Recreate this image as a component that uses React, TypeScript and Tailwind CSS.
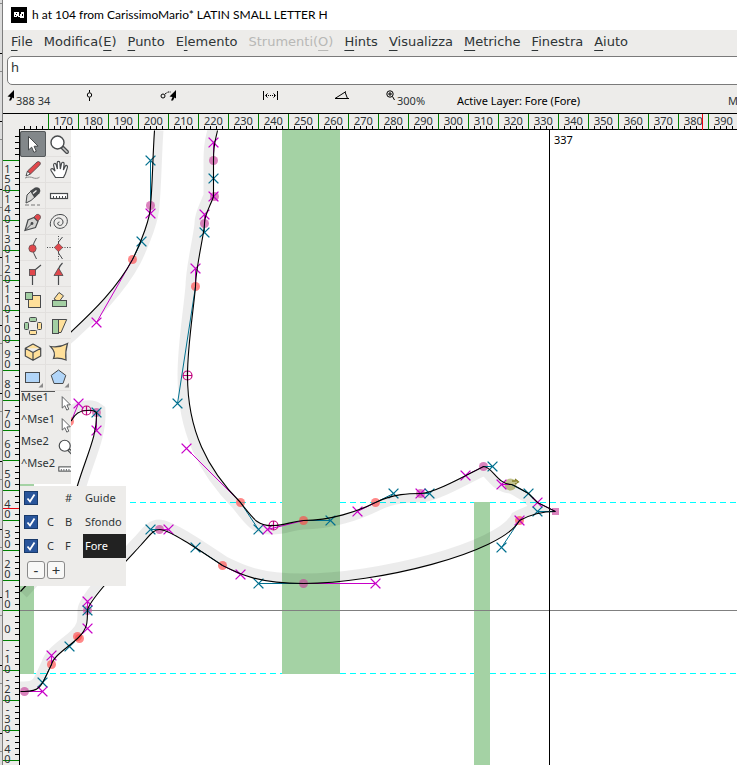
import React from 'react';

interface MenuItem {
    before?: string;
    key: string;
    after?: string;
    disabled?: boolean;
}

type HandleKind = 'prev' | 'next';
type NodeKind = 'curve' | 'smooth' | 'extremum' | 'corner' | 'selected';

const MENU: MenuItem[] = [
    { key: 'F', after: 'ile' },
    { before: 'Modifica(', key: 'E', after: ')' },
    { key: 'P', after: 'unto' },
    { before: 'E', key: 'l', after: 'emento' },
    { before: 'Strumenti(', key: 'O', after: ')', disabled: true },
    { key: 'H', after: 'ints' },
    { key: 'V', after: 'isualizza' },
    { key: 'M', after: 'etriche' },
    { key: 'F', after: 'inestra' },
    { key: 'A', after: 'iuto' },
];

const H_MARKS = Array.from({ length: 23 }, (_, i) => 170 + i * 10);
const V_MARKS = Array.from({ length: 20 }, (_, i) => 150 - i * 10);

const INK = '#474a4c';
const RED = '#e0484c';
const YELLOW = '#ffe09a';
const GREEN = '#a3cfa3';

/* Tool drawings, each on a 26x26 cell */
const TOOLS: { name: string; icon: React.ReactNode }[] = [
    {
        name: 'Pointer',
        icon: <path d="M8.5 5.5V19l3.2-2.8 2.2 5.2 2.4-1.1-2.2-5 4-.2z" fill="#fff" stroke={INK} />,
    },
    {
        name: 'Magnify',
        icon: (
            <>
                <path d="M16 16l5 5" stroke={INK} strokeWidth="4" strokeLinecap="round" />
                <path d="M17 17l4 4" stroke="#c9c9c7" strokeWidth="1.6" strokeLinecap="round" />
                <circle cx="11.5" cy="11.5" r="6.5" fill="#fff" stroke={INK} strokeWidth="1.4" />
            </>
        ),
    },
    {
        name: 'Freehand',
        icon: (
            <>
                <path d="M6 19l1.5-5 3 3z" fill="#fff" stroke={INK} />
                <path d="M7.5 14L17 5q1.5-1 2.8.2t0 2.8L10.5 17z" fill={RED} stroke={INK} strokeWidth=".8" />
                <path d="M5 21c4-1.5 6-1 8-.2s5 .8 6.5-.6" fill="none" stroke="#8c8c8c" />
            </>
        ),
    },
    {
        name: 'Scroll',
        icon: (
            <path
                d="M9.5 20.5L5.3 14q-1-1.8.2-2.3t2.2 1L9 14.2 7.6 8.3q-.2-1.6 1-1.8t1.6 1.3l1.2 4.3L11.2 6q0-1.6 1.3-1.6T13.9 6l.4 6 1.2-5.5q.4-1.5 1.6-1.2t1 1.8L17.4 13l1.7-3.6q.7-1.3 1.7-.8t.6 1.8l-2 6.3-1.9 3.8z"
                fill="#fff"
                stroke={INK}
                strokeWidth="1.2"
            />
        ),
    },
    {
        name: 'Knife',
        icon: (
            <>
                <path d="M6 20l1-8 4-4 5 5-5 4.5z" fill="#d8d8d6" stroke={INK} />
                <path d="M10 8l5-3.5q3.5-1 4.8 1.2t-.3 4.5L14.5 15z" fill={INK} />
                <path d="M13 10.5l3.5-3" stroke="#ededeb" strokeWidth="1.4" />
                <path d="M5 22h4M11 22h4M17 22h3" stroke="#777" />
            </>
        ),
    },
    {
        name: 'Ruler',
        icon: (
            <>
                <rect x="4.5" y="10.5" width="17" height="5" fill="#fff" stroke={INK} strokeWidth="1.2" />
                <path d="M7.5 15v-2M10.5 15v-2M13.5 15v-2M16.5 15v-2M19.5 15v-2" stroke={INK} />
            </>
        ),
    },
    {
        name: 'Pen',
        icon: (
            <>
                <path d="M5 21.5l3-10.5 6-2.5 4 4-2.5 6z" fill="#d3d3d1" stroke={INK} strokeWidth="1.2" />
                <path d="M5 21.5l6.5-6.5" stroke={INK} />
                <circle cx="12" cy="14.5" r="1.4" fill={INK} />
                <path d="M14 8l2.5-2.5q2-.7 3.3.8t.4 3.2L18 12z" fill={RED} stroke={INK} strokeWidth=".7" />
            </>
        ),
    },
    {
        name: 'Spiro',
        icon: (
            <path
                d="M4.5 17.5C3 10 9 5 15 5.5s7.5 6 5.5 10-7.5 5-10.5 2.5-2.5-7 .5-8.5 6.5.5 6.5 3.5-3 4.2-4.5 3-.8-3 1-3"
                fill="none"
                stroke={INK}
            />
        ),
    },
    {
        name: 'Curve point',
        icon: (
            <>
                <path d="M16.5 3q-7 10 0 21" fill="none" stroke={INK} />
                <circle cx="12.5" cy="13.5" r="3.7" fill={RED} stroke={INK} strokeWidth=".6" />
            </>
        ),
    },
    {
        name: 'HV curve point',
        icon: (
            <>
                <path d="M1 12.5h24M12.5 1v24" stroke={INK} strokeDasharray="1 1.5" />
                <path d="M16.5 2l-4 5v11l4 6" fill="none" stroke={INK} />
                <path d="M12.5 8.3l4.2 4.2-4.2 4.2-4.2-4.2z" fill={RED} stroke={INK} strokeWidth=".6" />
            </>
        ),
    },
    {
        name: 'Corner point',
        icon: (
            <>
                <path d="M21 4l-8.5 7v13" fill="none" stroke={INK} strokeWidth="1.2" />
                <rect x="9.5" y="8.5" width="6" height="6" fill={RED} stroke={INK} strokeWidth=".8" />
            </>
        ),
    },
    {
        name: 'Tangent point',
        icon: (
            <>
                <path d="M16.5 2q-3 3-4 6v16" fill="none" stroke={INK} strokeWidth="1.2" />
                <path d="M12.5 7l4.5 7.5H8z" fill={RED} stroke={INK} strokeWidth=".8" />
            </>
        ),
    },
    {
        name: 'Scale',
        icon: (
            <g stroke={INK}>
                <rect x="8.5" y="8.5" width="12" height="12" fill={YELLOW} />
                <rect x="5.5" y="5.5" width="7" height="7" fill={GREEN} />
            </g>
        ),
    },
    {
        name: 'Rotate',
        icon: (
            <g stroke={INK}>
                <path d="M8 12l5-6.5 4.5 3.3-4.5 6z" fill={YELLOW} />
                <rect x="6.5" y="13.5" width="14" height="6" fill={GREEN} />
            </g>
        ),
    },
    {
        name: 'Flip',
        icon: (
            <g stroke={INK}>
                <circle cx="13" cy="13" r="6" fill="none" stroke="#aaa" strokeDasharray="2 2" />
                <rect x="9.5" y="4.5" width="7" height="4" rx="1" fill={GREEN} />
                <rect x="4.5" y="9.5" width="4" height="7" rx="1" fill={GREEN} />
                <rect x="17.5" y="9.5" width="4" height="7" rx="1" fill={YELLOW} />
                <rect x="9.5" y="17.5" width="7" height="4" rx="1" fill={YELLOW} />
            </g>
        ),
    },
    {
        name: 'Skew',
        icon: (
            <g stroke={INK}>
                <path d="M12.5 6.5h8.2L15 19.5h-2.5z" fill={YELLOW} />
                <rect x="6.5" y="6.5" width="6" height="14" fill={GREEN} />
            </g>
        ),
    },
    {
        name: '3D rotate',
        icon: (
            <path
                d="M13 5l7.7 4.2v7.8L13 21.3 5.3 17V9.2zM5.3 9.2l7.7 4.3 7.7-4.3M13 13.5v7.8"
                fill={YELLOW}
                stroke={INK}
                strokeWidth="1.2"
                strokeLinejoin="round"
            />
        ),
    },
    {
        name: 'Perspective',
        icon: <path d="M4.5 7.5q9 1.5 17-3-2.5 8-1.5 16.5-6-2.5-12.5-1.500 3-6-3-12z" fill={YELLOW} stroke={INK} strokeWidth="1.2" />,
    },
    {
        name: 'Rectangle',
        icon: (
            <>
                <rect x="5.5" y="7.5" width="14" height="10" fill="#b1d5f8" stroke={INK} />
                <path d="M23 18v4.5h-4.5z" fill="#8a8a8a" />
            </>
        ),
    },
    {
        name: 'Polygon',
        icon: (
            <>
                <path d="M12.5 5l7.3 5.4L17 18.5H8L5.2 10.4z" fill="#b1d5f8" stroke={INK} />
                <path d="M23 18v4.5h-4.5z" fill="#8a8a8a" />
            </>
        ),
    },
];

const MOUSE_BINDINGS = [
    { label: 'Mse1', tool: 0 },
    { label: '^Mse1', tool: 0 },
    { label: 'Mse2', tool: 1 },
    { label: '^Mse2', tool: 5 },
];

const LAYERS = [
    { name: 'Guide', curve: '', kind: '#' },
    { name: 'Sfondo', curve: 'C', kind: 'B' },
    { name: 'Fore', curve: 'C', kind: 'F' },
];

/* Glyph outline, in canvas units */
const STEM_LEFT = 'M154 130C152 160 152 185 150 205C150 217 141 241 132 259C116 289 90 313 71 331L20 376';
const COUNTER = 'M20 440L71 420C75 412 80 410 86 410Q92 409 96 412C97 435 86 455 77 485C65 525 50 560 20 591';
const BODY =
    'M20 691H24C42 691 42 682 51 664C53 655 69 646 78 637C87 628 87 622 87 610C87 600 130 556 140 545C150 534 153 529 159 529C168 529 195 547 222 565C240 574 258 583 303 583C375 583 501 553 519 520C528 515 540 511 555 511L537 502L528 493C522 490 517 486 511 484C497 484 492 466 483 466C465 475 433 493 420 493C410 493 393 493 375 502C357 511 330 520 303 520C290 521 285 525 273 525C258 526 254 520 240 502C207 469 187 430 187 375C187 345 193 310 195 286C195 268 204 232 204 223C204 214 210 205 213 196V160C213 142 215 140 217 130';
const REGION = [STEM_LEFT, COUNTER.replace('M', 'L'), BODY.replace('M', 'L'), 'Z'].join('');

const HANDLES: [HandleKind, number, number, number, number][] = [
    ['next', 150, 160, 150, 205],
    ['prev', 150, 213, 150, 205],
    ['next', 141, 241, 132, 259],
    ['prev', 96, 322, 132, 259],
    ['prev', 213, 142, 213, 160],
    ['next', 213, 178, 213, 178],
    ['prev', 213, 196, 213, 196],
    ['prev', 204, 214, 204, 223],
    ['next', 204, 232, 204, 223],
    ['prev', 195, 268, 195, 286],
    ['next', 177, 403, 195, 286],
    ['prev', 186, 448, 240, 502],
    ['next', 258, 529, 240, 502],
    ['prev', 267, 529, 303, 520],
    ['next', 330, 520, 303, 520],
    ['prev', 357, 511, 375, 502],
    ['next', 393, 493, 375, 502],
    ['prev', 420, 493, 420, 493],
    ['next', 429, 493, 420, 493],
    ['prev', 465, 475, 483, 466],
    ['next', 492, 466, 483, 466],
    ['prev', 501, 484, 511, 484],
    ['next', 528, 493, 511, 484],
    ['prev', 537, 502, 555, 511],
    ['next', 537, 511, 555, 511],
    ['prev', 519, 520, 519, 520],
    ['next', 501, 547, 519, 520],
    ['prev', 375, 583, 303, 583],
    ['next', 258, 583, 303, 583],
    ['prev', 240, 574, 222, 565],
    ['next', 195, 547, 222, 565],
    ['prev', 168, 529, 159, 529],
    ['next', 150, 529, 159, 529],
    ['prev', 87, 601, 87, 610],
    ['next', 87, 610, 87, 610],
    ['prev', 87, 628, 78, 637],
    ['next', 69, 646, 78, 637],
    ['prev', 51, 655, 51, 664],
    ['next', 42, 682, 51, 664],
    ['prev', 42, 691, 24, 691],
    ['prev', 78, 403, 71, 420],
    ['next', 96, 412, 96, 412],
    ['prev', 96, 430, 96, 412],
];

const NODES: [NodeKind, number, number][] = [
    ['smooth', 150, 205],
    ['curve', 132, 259],
    ['smooth', 213, 160],
    ['smooth', 214, 196],
    ['smooth', 204, 223],
    ['curve', 195, 286],
    ['extremum', 187, 375],
    ['curve', 240, 502],
    ['extremum', 273, 525],
    ['curve', 303, 520],
    ['curve', 375, 502],
    ['smooth', 420, 493],
    ['smooth', 483, 466],
    ['selected', 511, 484],
    ['corner', 555, 511],
    ['curve', 519, 520],
    ['smooth', 303, 583],
    ['curve', 222, 565],
    ['smooth', 159, 529],
    ['smooth', 87, 610],
    ['curve', 77, 636],
    ['curve', 79, 638],
    ['curve', 51, 664],
    ['smooth', 24, 691],
    ['curve', 69, 421],
    ['extremum', 86, 410],
    ['smooth', 96, 412],
];

const HANDLE_COLORS: Record<HandleKind, string> = { prev: '#c800c8', next: '#00708f' };

const Icon: React.FC<{ size?: number; children: React.ReactNode }> = ({ size = 26, children }) => (
    <svg width={size} height={size} viewBox="0 0 26 26" fill="none" aria-hidden="true" className="block shrink-0">
        {children}
    </svg>
);

const GlyphNode: React.FC<{ kind: NodeKind; x: number; y: number }> = ({ kind, x, y }) => {
    if (kind === 'extremum') {
        return (
            <g fill="none" stroke="#c0007c" strokeWidth="1.2">
                <circle cx={x + 0.5} cy={y + 0.5} r="4.5" />
                <path d={`M${x - 4} ${y + 0.5}h9M${x + 0.5} ${y - 4}v9`} />
            </g>
        );
    }
    if (kind === 'corner') {
        return <rect x={x - 3} y={y - 3} width="7" height="7" fill="#c8409b" fillOpacity=".65" />;
    }
    if (kind === 'selected') {
        return (
            <g>
                <circle cx={x - 0.5} cy={y + 0.5} r="6" fill="#8f8f32" fillOpacity=".55" />
                <path d={`M${x + 1} ${y - 3}h6M${x + 4} ${y - 5}l3.5 3-3.5 2`} stroke="#85802a" fill="none" strokeWidth="1.3" />
            </g>
        );
    }
    return <circle cx={x + 0.5} cy={y + 0.5} r="4.5" fill={kind === 'curve' ? '#ff4848' : '#c8409b'} fillOpacity=".65" />;
};

const GlyphCanvas: React.FC = () => (
    <svg className="block h-full w-full" role="img" aria-label="Glyph outline of h">
        <defs>
            <clipPath id="inside">
                <path d={REGION} />
            </clipPath>
        </defs>
        <g transform="translate(-20 -130)" fill="none">
            {/* Blue zones and metrics */}
            <path d="M20 502.5H4000M20 673.5H4000" stroke="#00ffff" strokeDasharray="6 4" />
            <g fill="#a4d2a4" shapeRendering="crispEdges">
                <rect x="282" y="130" width="58" height="544" />
                <rect x="474" y="502" width="16" height="2000" />
                <rect x="20" y="484" width="14" height="190" />
            </g>
            <path d="M20 610.5H4000" stroke="#808080" />

            {/* Stroke thickness shown inside the outline */}
            <g clipPath="url(#inside)">
                <path
                    d={STEM_LEFT + COUNTER + BODY}
                    stroke="#000"
                    strokeOpacity=".075"
                    strokeWidth="19"
                />
            </g>
            <path d="M549.5 130V4000" stroke="#000" />

            {NODES.map(([kind, x, y], i) => (
                <GlyphNode key={i} kind={kind} x={x} y={y} />
            ))}
            {HANDLES.map(([kind, x, y, nx, ny], i) => (
                <g key={i} stroke={HANDLE_COLORS[kind]}>
                    <path d={`M${x + 0.5} ${y + 0.5}L${nx + 0.5} ${ny + 0.5}`} />
                    <path d={`M${x - 4} ${y - 4}l9 9M${x + 5} ${y - 4}l-9 9`} strokeWidth="1.2" strokeLinecap="square" />
                </g>
            ))}
            <path d={STEM_LEFT + COUNTER + BODY} stroke="#000" strokeWidth="1.1" transform="translate(.5 .5)" />
            <text x="554" y="144" fill="#000" className="text-[11px]">
                337
            </text>
        </g>
    </svg>
);

const Toolbox: React.FC = () => (
    <div className="absolute top-0 left-0 w-[51px] overflow-hidden bg-[#edecea] pt-px pb-1">
        <div className="grid grid-cols-[26px_26px]">
            {TOOLS.map((tool, i) => (
                <button
                    key={tool.name}
                    aria-label={tool.name}
                    className={
                        i === 0
                            ? 'h-[26px] w-[26px] rounded-[2px] bg-[#82878a] outline outline-1 -outline-offset-1 outline-[#55595b]'
                            : 'h-[26px] w-[26px] shadow-[inset_-1px_-1px_#e2e0de]'
                    }
                >
                    <Icon>{tool.icon}</Icon>
                </button>
            ))}
        </div>
        <div className="ml-px w-[34px] border-t border-[#555]" />
        {MOUSE_BINDINGS.map(({ label, tool }) => (
            <div key={label} className="flex h-[22px] items-start justify-between pl-px text-[11px] leading-[10px] text-[#2e3436]">
                <span>{label}</span>
                <span className="-mr-[6px]">
                    <Icon size={22}>{TOOLS[tool].icon}</Icon>
                </span>
            </div>
        ))}
    </div>
);

const LayersPanel: React.FC = () => (
    <div className="absolute top-[356px] left-0 w-[106px] bg-[#edecea] pb-[7px] text-[11px] text-[#2e3436]">
        {LAYERS.map((layer) => (
            <label key={layer.name} className="grid h-6 grid-cols-[22px_18px_23px_1fr] items-center">
                <span className="relative ml-1 block h-[14px] w-[14px]">
                    <input
                        type="checkbox"
                        defaultChecked
                        className="peer block h-[14px] w-[14px] appearance-none border border-[#193a6b] bg-white checked:bg-[#29559b]"
                    />
                    <svg viewBox="0 0 14 14" className="pointer-events-none absolute inset-0 hidden peer-checked:block">
                        <path d="M3.5 7.5l2.5 3 4.5-7" stroke="#fff" strokeWidth="1.8" fill="none" />
                    </svg>
                </span>
                <span className="pl-[5px]">{layer.curve}</span>
                <span className="pl-[5px]">{layer.kind}</span>
                <span
                    className={
                        layer.name === 'Fore'
                            ? 'flex h-6 items-center bg-[#222] pl-[2px] text-white'
                            : 'flex h-6 items-center pl-[2px]'
                    }
                >
                    {layer.name}
                </span>
            </label>
        ))}
        <div className="flex gap-[2px] pt-[3px] pl-[7px] leading-none">
            {['-', '+'].map((sign) => (
                <button
                    key={sign}
                    aria-label={sign === '-' ? 'Remove layer' : 'Add layer'}
                    className="flex h-[18px] w-[18px] items-center justify-center rounded-[3px] border border-[#8a8a8a] bg-[#f8f8f7] text-[15px]"
                >
                    {sign}
                </button>
            ))}
        </div>
    </div>
);

const InfoBar: React.FC = () => (
    <div className="flex h-7 shrink-0 overflow-hidden pt-[5px] pl-1 text-[11px] whitespace-nowrap text-[#2e3436]">
        <div className="flex w-[78px] shrink-0">
            <svg width="9" height="11" viewBox="0 0 9 11" aria-hidden="true">
                <path d="M7 0v8.5L5.5 7.5 4 10.5H2L3.5 7 .5 6.5z" fill="#000" />
            </svg>
            <span className="pt-[3px] leading-4">388 34</span>
        </div>
        <div className="w-[75px] shrink-0">
            <svg width="9" height="11" viewBox="0 0 9 11" fill="none" stroke="#000" aria-hidden="true">
                <path d="M4.5 0v2.5M4.5 7.5V11" />
                <circle cx="4.5" cy="5" r="2.2" />
            </svg>
        </div>
        <div className="w-[102px] shrink-0">
            <svg width="17" height="11" viewBox="0 0 17 11" fill="none" stroke="#000" aria-hidden="true">
                <circle cx="3" cy="6" r="2" />
                <path d="M5 4l3-2h3" strokeDasharray="2 1" />
                <path d="M16 0v8.5L14.5 7.5 13 10.5h-2L12.5 7l-3-.5z" fill="#000" stroke="none" />
            </svg>
        </div>
        <div className="w-[72px] shrink-0">
            <svg width="17" height="11" viewBox="0 0 17 11" fill="none" stroke="#000" aria-hidden="true">
                <path d="M1.5 1v9M15.5 1v9M5.5 3.5l-2 2 2 2M11.5 3.5l2 2-2 2" />
                <path d="M4 5.5h10" strokeDasharray="1 1" />
            </svg>
        </div>
        <div className="w-[51px] shrink-0">
            <svg width="17" height="11" viewBox="0 0 17 11" fill="none" stroke="#000" aria-hidden="true">
                <path d="M15 8.5H1l11-7M11 2l2.5 6.5" />
            </svg>
        </div>
        <div className="flex w-[72px] shrink-0">
            <svg width="12" height="11" viewBox="0 0 12 11" fill="none" stroke="#000" aria-hidden="true">
                <circle cx="5" cy="4" r="3.2" />
                <path d="M3 4h4M5 2v4M7.5 6.5l2 3.5" />
            </svg>
            <span className="pt-[3px] leading-4">300%</span>
        </div>
        <span className="w-[271px] shrink-0 pt-[3px] leading-4 text-black">Active Layer: Fore (Fore)</span>
        <span className="pt-[3px] leading-4">M</span>
    </div>
);

const HorizontalRuler: React.FC = () => (
    <div className="relative flex h-[17px] shrink-0 overflow-hidden border-t border-black pl-4 text-[11px] text-[#2e3436]">
        <div className="flex w-[29px] shrink-0 flex-col justify-end border-b border-black">
            <div className="ml-[5px] h-[3px] bg-[repeating-linear-gradient(90deg,#000_0_1px,transparent_1px_6px)]" />
        </div>
        {H_MARKS.map((mark) => (
            <div key={mark} className="relative w-[30px] shrink-0 border-b border-l border-b-black border-l-[#008000]">
                <span className="block pl-[5px] leading-[14px]">{mark}</span>
                <div className="absolute right-0 bottom-0 left-[5px] h-[3px] bg-[repeating-linear-gradient(90deg,#000_0_1px,transparent_1px_6px)]" />
            </div>
        ))}
        <div className="absolute inset-y-0 left-[699px] w-px bg-red-600" />
    </div>
);

const VerticalRuler: React.FC = () => (
    <div className="relative w-[17px] shrink-0 overflow-hidden border-r border-black text-[11px] text-[#2e3436]">
        <div className="flex h-[30px] justify-end">
            <div className="mt-[6px] w-[4px] bg-[repeating-linear-gradient(180deg,#000_0_1px,transparent_1px_6px)]" />
        </div>
        {V_MARKS.map((mark) => (
            <div key={mark} className="flex h-[30px] justify-between border-t border-[#008000]">
                <div className="flex flex-col justify-center pt-[7px] pl-px">
                    <span className="w-[7px] text-center leading-[10px] break-all">{mark}</span>
                </div>
                <div className="mt-[5px] w-[4px] bg-[repeating-linear-gradient(180deg,#000_0_1px,transparent_1px_6px)]" />
            </div>
        ))}
        <div className="h-[5px] border-t border-[#008000]" />
        <div className="absolute inset-x-0 top-[378px] h-px bg-red-600" />
    </div>
);

const App: React.FC = () => {
    return (
        <div className="flex h-screen overflow-hidden bg-[#edecea] font-['Noto_Sans','DejaVu_Sans',sans-serif]">
            {/* Edge of the window behind */}
            <div className="w-[3px] shrink-0 border-r border-[#7d7d7d] bg-[#dcdcdc] bg-[repeating-linear-gradient(180deg,transparent_0_3px,#888_3px_4px,transparent_4px_53px,#000_53px_54px,transparent_54px_68px)]" />

            <div className="flex min-w-0 flex-1 flex-col">
                <header className="flex h-[30px] shrink-0 items-center gap-[5px] bg-white pl-2">
                    <svg width="16" height="16" viewBox="0 0 16 16" shapeRendering="crispEdges" aria-hidden="true">
                        <rect width="16" height="16" fill="#000" />
                        <path d="M3 5h5v4H6v1H3zM9 7h1V5h3v6H9v-1H7V9h2z" fill="#fff" />
                        <path d="M5 6h1v1H5zM11 7h1v2h-1zM4 8h1v1H4z" fill="#000" />
                    </svg>
                    <h1 className="truncate font-['Lato','Noto_Sans',sans-serif] text-[12px] text-black">
                        h at 104 from CarissimoMario* LATIN SMALL LETTER H
                    </h1>
                </header>

                <nav className="flex h-[26px] shrink-0 items-center gap-[11px] overflow-hidden pl-2 font-['DejaVu_Sans',sans-serif] text-[13px] whitespace-nowrap text-[#2e3436]">
                    {MENU.map((item) => (
                        <button
                            key={`${item.before ?? ''}${item.key}${item.after}`}
                            disabled={item.disabled}
                            className="pb-[2px] disabled:text-[#b8b8b6]"
                        >
                            {item.before}
                            <span className="underline underline-offset-4">{item.key}</span>
                            {item.after}
                        </button>
                    ))}
                </nav>

                <div className="shrink-0 overflow-hidden pl-1">
                    <input
                        type="text"
                        defaultValue="h"
                        aria-label="Glyphs shown"
                        className="block h-[29px] w-[calc(100%+8px)] rounded-[5px] border border-[#7a7a7a] bg-white pb-2 pl-[3px] text-[13px] text-[#2e3436] outline-none"
                    />
                </div>

                <InfoBar />
                <HorizontalRuler />

                <div className="flex min-h-0 flex-1">
                    <VerticalRuler />
                    <main className="relative min-w-0 flex-1 overflow-hidden bg-white">
                        <GlyphCanvas />
                        <Toolbox />
                        <LayersPanel />
                    </main>
                </div>
            </div>
        </div>
    );
};

export default App;
